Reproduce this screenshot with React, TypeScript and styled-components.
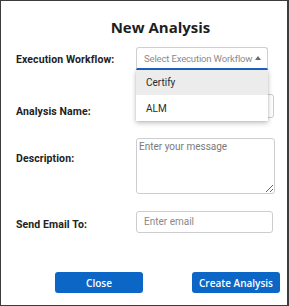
import { FC } from 'react'
import styled, { createGlobalStyle } from 'styled-components'

const GlobalStyle = createGlobalStyle`
  html, body {
    margin: 0;
    padding: 0;
    background: #ffffff;
  }
`

const Frame = styled.div`
  position: relative;
  width: 289px;
  height: 306px;
  box-sizing: border-box;
  border: 1px solid #3c3c3c;
  border-right-width: 2px;
  background: #ffffff;
  font-family: Roboto, 'Liberation Sans', sans-serif;
`

const Title = styled.div`
  padding: 16px 0 0 33px;
  height: 30px;
  text-align: center;
  font-family: 'Open Sans', 'Noto Sans', sans-serif;
  font-size: 15px;
  font-weight: 700;
  color: #1e1e1e;
  line-height: 20px;
`

const Form = styled.div`
  display: flex;
  flex-direction: column;
`

const Row = styled.div<{ $mt: number; $h: number }>`
  display: grid;
  grid-template-columns: 120px 1fr;
  align-items: start;
  margin-top: ${(p) => p.$mt}px;
  height: ${(p) => p.$h}px;
  padding-left: 15px;
`

const Label = styled.label<{ $top: number }>`
  margin-top: ${(p) => p.$top}px;
  font-size: 10.5px;
  line-height: 13px;
  font-weight: 700;
  color: #222222;
  letter-spacing: 0.1px;
  white-space: nowrap;
`

const Control = styled.div<{ $w: number }>`
  position: relative;
  width: ${(p) => p.$w}px;
  height: 100%;
`

const SelectBox = styled.div`
  display: flex;
  align-items: center;
  justify-content: space-between;
  box-sizing: border-box;
  height: 100%;
  padding: 0 6px 0 7px;
  border: 1px solid #cfcfcf;
  border-bottom: 2px solid #1f64c0;
  border-radius: 3px 3px 0 0;
  font-size: 9.5px;
  letter-spacing: -0.15px;
  color: #8a8a8a;
  white-space: nowrap;
`

const Caret = styled.span`
  flex-shrink: 0;
  width: 0;
  height: 0;
  border-left: 3.5px solid transparent;
  border-right: 3.5px solid transparent;
  border-bottom: 4px solid #6a6a6a;
  margin-top: -1px;
`

const Menu = styled.div`
  position: absolute;
  left: 0;
  right: 0;
  top: 100%;
  z-index: 2;
  background: #ffffff;
  box-shadow: 0 2px 5px rgba(0, 0, 0, 0.25), 0 0 2px rgba(0, 0, 0, 0.1);
`

const MenuItem = styled.div<{ $active?: boolean }>`
  height: 25px;
  display: flex;
  align-items: center;
  padding-left: 10px;
  font-size: 10px;
  color: #2a2a2a;
  background: ${(p) => (p.$active ? '#ececec' : '#ffffff')};
  &:last-child {
    height: 26px;
  }
`

const Field = styled.input`
  box-sizing: border-box;
  width: 100%;
  height: 100%;
  padding: 0 7px;
  border: 1px solid #cdcdcd;
  border-radius: 3px;
  font-family: Roboto, 'Liberation Sans', sans-serif;
  font-size: 10px;
  color: #333333;
  outline: none;
  &::placeholder {
    color: #8a8a8a;
  }
`

const Area = styled.textarea`
  box-sizing: border-box;
  display: block;
  width: 100%;
  height: 100%;
  padding: 2px 2px;
  border: 1px solid #cdcdcd;
  border-radius: 3px;
  font-family: Roboto, 'Liberation Sans', sans-serif;
  font-size: 10px;
  color: #333333;
  outline: none;
  &::placeholder {
    color: #7a7a7a;
  }
`

const Footer = styled.div`
  display: flex;
  gap: 49px;
  margin-top: 40px;
  padding-left: 54px;
`

const Button = styled.button`
  width: 88px;
  height: 21px;
  border: none;
  border-radius: 3px;
  background: #0b66c6;
  color: #ffffff;
  font-family: 'Open Sans', 'Noto Sans', sans-serif;
  font-size: 10px;
  font-weight: 600;
  padding: 0;
  cursor: pointer;
`

const App: FC = () => {
  return (
    <>
      <GlobalStyle />
      <Frame>
        <Title>New Analysis</Title>
        <Form>
          <Row $mt={0} $h={23}>
            <Label $top={6}>Execution Workflow:</Label>
            <Control $w={132}>
              <SelectBox>
                <span>Select Execution Workflow</span>
                <Caret />
              </SelectBox>
              <Menu>
                <MenuItem $active>Certify</MenuItem>
                <MenuItem>ALM</MenuItem>
              </Menu>
            </Control>
          </Row>
          <Row $mt={24} $h={22}>
            <Label $top={11}>Analysis Name:</Label>
            <Control $w={138}>
              <Field />
            </Control>
          </Row>
          <Row $mt={22} $h={56}>
            <Label $top={14}>Description:</Label>
            <Control $w={139}>
              <Area placeholder="Enter your message" />
            </Control>
          </Row>
          <Row $mt={16} $h={22}>
            <Label $top={8}>Send Email To:</Label>
            <Control $w={137}>
              <Field placeholder="Enter email" />
            </Control>
          </Row>
        </Form>
        <Footer>
          <Button>Close</Button>
          <Button>Create Analysis</Button>
        </Footer>
      </Frame>
    </>
  )
}

export default App
